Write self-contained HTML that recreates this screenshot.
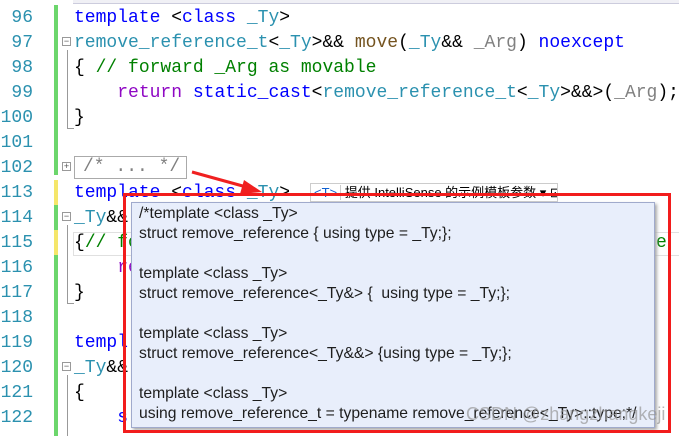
<!DOCTYPE html>
<html><head><meta charset="utf-8"><style>
body{margin:0;width:679px;height:436px;overflow:hidden;background:#fff;position:relative;font-family:"Liberation Mono",monospace;}
.ln{position:absolute;left:0;width:33px;text-align:right;font-size:18px;color:#2b91af;margin-top:3px}
.c{position:absolute;left:74px;font-size:18px;white-space:pre;color:#000;margin-top:3px}
.k{color:#0000ff}.t{color:#2b91af}.g{color:#008000}.p{color:#8f08c4}.f{color:#74531f}.a{color:#808080}
.bar{position:absolute;left:54px;width:4px;}
.fold{position:absolute;left:62px;width:7px;height:7px;border:1px solid #999;font-size:9px;line-height:7px;text-align:center;color:#555;font-family:"Liberation Sans",sans-serif;}
.pop{position:absolute;left:131px;top:202px;width:522px;height:224px;background:#e8eefb;border:1px solid #a0aacc;box-shadow:2px 2px 3px #aaa;font-family:"Liberation Sans",sans-serif;font-size:15.7px;color:#1e1e1e;}
.pop div{position:absolute;left:7px;white-space:pre;}
</style></head><body>
<div style="position:absolute;left:73px;top:0;width:606px;height:3px;border-bottom:1px solid #ccd;background:#f0f0f5"></div>
<div class="bar" style="top:5px;height:170px;background:#6cd66c"></div>
<div class="bar" style="top:180px;height:25px;background:#f5e66a"></div>
<div class="bar" style="top:205px;height:25px;background:#6cd66c"></div>
<div class="bar" style="top:230px;height:25px;background:#f5e66a"></div>
<div class="bar" style="top:255px;height:181px;background:#6cd66c"></div>
<div style="position:absolute;left:67px;top:50px;width:6px;height:78px;border-left:1px solid #999;border-bottom:1px solid #999"></div>
<div style="position:absolute;left:67px;top:225px;width:6px;height:78px;border-left:1px solid #999;border-bottom:1px solid #999"></div>
<div style="position:absolute;left:67px;top:375px;width:1px;height:61px;background:#999"></div>
<div class="fold" style="top:37px">−</div>
<div class="fold" style="top:162px">+</div>
<div class="fold" style="top:212px">−</div>
<div class="fold" style="top:362px">−</div>
<div style="position:absolute;left:73px;top:232px;width:606px;height:22px;border:1px solid #e0e0e0"></div>
<div class="ln" style="top:5px">96</div><div class="c" style="top:5px"><span class="k">template</span> &lt;<span class="k">class</span> <span class="t">_Ty</span>&gt;</div>
<div class="ln" style="top:30px">97</div><div class="c" style="top:30px"><span class="t">remove_reference_t</span>&lt;<span class="t">_Ty</span>&gt;&amp;&amp; <span class="f">move</span>(<span class="t">_Ty</span>&amp;&amp; <span class="a">_Arg</span>) <span class="k">noexcept</span></div>
<div class="ln" style="top:55px">98</div><div class="c" style="top:55px">{ <span class="g">// forward _Arg as movable</span></div>
<div class="ln" style="top:80px">99</div><div class="c" style="top:80px">    <span class="p">return</span> <span class="k">static_cast</span>&lt;<span class="t">remove_reference_t</span>&lt;<span class="t">_Ty</span>&gt;&amp;&amp;&gt;(<span class="a">_Arg</span>);</div>
<div class="ln" style="top:105px">100</div><div class="c" style="top:105px">}</div>
<div class="ln" style="top:130px">101</div>
<div class="ln" style="top:155px">102</div><div class="c" style="top:155px;margin-top:1px;left:74px;border:1px solid #aaa;color:#808080;padding:0 6px 0 8px;line-height:21px">/* ... */</div>
<div class="ln" style="top:180px">113</div><div class="c" style="top:180px"><span class="k">template</span> &lt;<span class="k">class</span> <span class="t">_Ty</span>&gt;</div>
<div style="position:absolute;left:310px;top:183px;width:246px;height:17px;border:1px solid #ccc;background:#fff;font-family:'Liberation Sans','Noto Sans CJK SC',sans-serif;font-size:13px;line-height:17px;white-space:nowrap;overflow:hidden"><span style="color:#1060d0;border-right:1px solid #ccc;padding:0 3px">&lt;T&gt;</span> 提供 IntelliSense 的示例模板参数 ▾ ⊡</div>
<div class="ln" style="top:205px">114</div><div class="c" style="top:205px"><span class="t">_Ty</span>&amp;&amp;</div>
<div class="ln" style="top:230px">115</div><div class="c" style="top:230px">{<span class="g">// fo</span></div>
<div class="c g" style="top:230px;left:656px">e</div>
<div class="ln" style="top:255px">116</div><div class="c p" style="top:255px">    re</div>
<div class="ln" style="top:280px">117</div><div class="c" style="top:280px">}</div>
<div class="ln" style="top:305px">118</div>
<div class="ln" style="top:330px">119</div><div class="c k" style="top:330px">templ</div>
<div class="ln" style="top:355px">120</div><div class="c" style="top:355px"><span class="t">_Ty</span>&amp;&amp;</div>
<div class="ln" style="top:380px">121</div><div class="c" style="top:380px">{</div>
<div class="ln" style="top:405px">122</div><div class="c k" style="top:405px">    s</div>
<svg style="position:absolute;left:0;top:0" width="679" height="436"><line x1="192" y1="172" x2="250" y2="188" stroke="#f02020" stroke-width="3"/><polygon points="262,192 244,180 240,194" fill="#f02020"/></svg>
<div class="pop">
<div style="top:2px">/*template &lt;class _Ty&gt;</div>
<div style="top:22px">struct remove_reference { using type = _Ty;};</div>
<div style="top:62px">template &lt;class _Ty&gt;</div>
<div style="top:82px">struct remove_reference&lt;_Ty&amp;&gt; {  using type = _Ty;};</div>
<div style="top:122px">template &lt;class _Ty&gt;</div>
<div style="top:142px">struct remove_reference&lt;_Ty&amp;&amp;&gt; {using type = _Ty;};</div>
<div style="top:182px">template &lt;class _Ty&gt;</div>
<div style="top:202px">using remove_reference_t = typename remove_reference&lt;_Ty&gt;::type;*/</div>
</div>
<div style="position:absolute;left:466px;top:404px;font-family:'Liberation Sans',sans-serif;font-size:18px;color:rgba(150,150,150,0.7)">CSDN @zhangzhangkeji</div>
<div style="position:absolute;left:123px;top:193px;width:542px;height:234px;border:3px solid #f21c1c"></div>
</body></html>
